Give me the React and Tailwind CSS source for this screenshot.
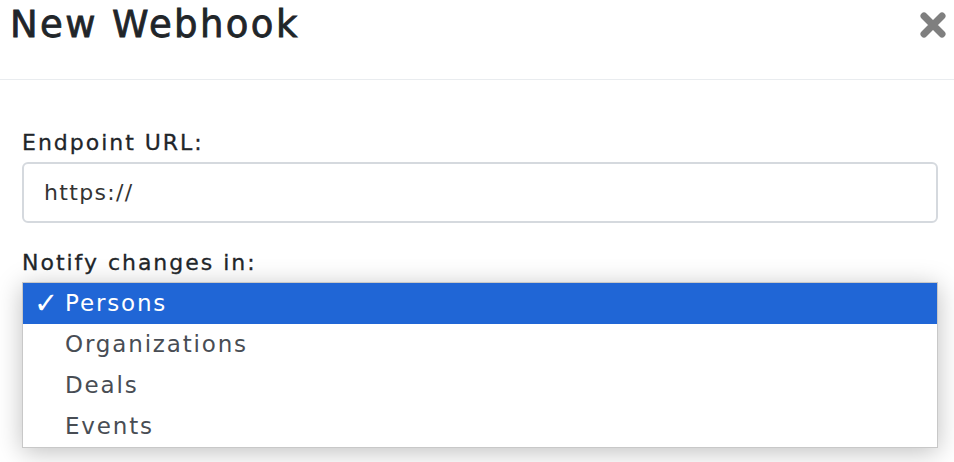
import { useState } from 'react'

const options = ['Persons', 'Organizations', 'Deals', 'Events']

export default function App() {
  const [selected, setSelected] = useState('Persons')

  return (
    <div className="w-[954px] h-[462px] bg-white overflow-hidden font-['DejaVu_Sans',sans-serif] text-[#212529]">
      <div className="flex items-start justify-between h-[80px] border-b border-[#e9ecef] pl-[10px] pr-[8px]">
        <h1 className="text-[37px] leading-none mt-[6px] tracking-[0.065em] [-webkit-text-stroke:0.8px]">New Webhook</h1>
        <button className="mt-[12px] w-[26px] h-[26px] text-[#7f7f7f]">
          <svg viewBox="0 0 26 26" width="26" height="26">
            <path d="M4 4 L22 22 M22 4 L4 22" stroke="currentColor" strokeWidth="7" strokeLinecap="round" />
          </svg>
        </button>
      </div>

      <div className="px-[22px] pr-[16px] pt-[48px]">
        <label className="block text-[22px] leading-[30px] mb-[4px] tracking-[0.09em] [-webkit-text-stroke:0.3px]">Endpoint URL:</label>
        <input
          defaultValue="https://"
          className="w-full h-[61px] border-2 border-[#d5d9de] rounded-[6px] px-[20px] text-[22px] tracking-[0.06em] text-[#333] outline-none"
        />

        <label className="block text-[22px] leading-[30px] mt-[25px] tracking-[0.09em] [-webkit-text-stroke:0.3px]">Notify changes in:</label>
        <ul className="mt-[4px] bg-white border border-[#c8c8c8] shadow-[0_4px_24px_rgba(0,0,0,0.25)]">
          {options.map(opt => (
            <li
              key={opt}
              onClick={() => setSelected(opt)}
              className={`flex items-center h-[41px] text-[23px] tracking-[0.08em] ${
                selected === opt ? 'bg-[#2066d6] text-white' : 'text-[#484d54]'
              }`}
            >
              <span className="w-[42px] pl-[11px] text-[29px] leading-none font-bold tracking-normal">{selected === opt ? '✓' : ''}</span>
              {opt}
            </li>
          ))}
        </ul>
      </div>
    </div>
  )
}
